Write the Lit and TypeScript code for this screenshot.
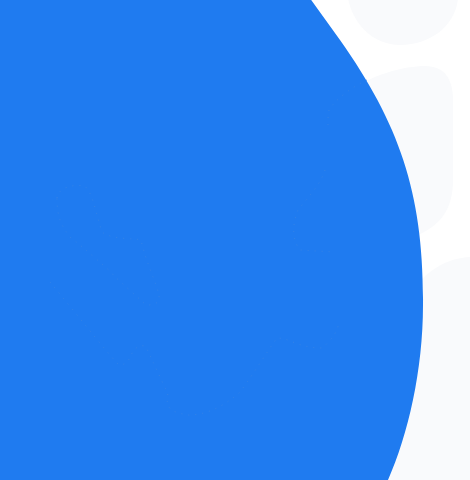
import { LitElement, html, css, svg } from "lit";
import { customElement } from "lit/decorators.js";

const BLOBS = [
  "M348 -2 C352 22 372 45 400 45 C432 45 456 24 458 -2 Z",
  "M345 95 C370 74 405 66 425 66 C445 66 453 80 453 100 L453 180 C453 210 440 225 418 235 L345 235 Z",
  "M410 295 C425 270 448 258 470 257 L470 480 L380 480 Z",
];

const BLUE =
  "M304 -10 L340 40 C400 125 424 195 423 305 C423 370 408 435 388 480 L378 498 L-10 498 L-10 -10 Z";

const GHOSTS = [
  "M57 198 C58 188 72 184 84 186 C92 190 95 210 102 232 C112 240 135 238 141 240 C146 262 156 282 159 295 C160 305 152 305 146 305 C130 290 112 275 112 273 C92 255 72 238 71 238 C60 225 57 215 57 198 Z",
  "M50 282 C75 312 105 350 117 363 C122 368 130 362 133 350 C140 345 145 345 146 347 C158 372 167 393 168 393 C165 408 170 412 188 415 C205 415 222 408 240 392 C255 372 268 350 277 338 C290 338 298 348 322 348 C332 340 340 328 338 322",
  "M325 170 C320 185 310 195 298 210 C292 225 292 240 300 250 L334 252",
  "M367 80 C350 88 335 100 329 110 C328 115 328 120 328 125",
];

@customElement("app-root")
export class AppRoot extends LitElement {
  static styles = css`
    :host {
      display: block;
      width: 470px;
      height: 480px;
      background: #ffffff;
      overflow: hidden;
    }
    .canvas {
      display: block;
      width: 470px;
      height: 480px;
    }
    .blob {
      fill: #f9fafc;
    }
    .blue {
      fill: #1f7bf0;
    }
    .ghost {
      fill: none;
      stroke: #3a84e4;
      stroke-width: 1;
      stroke-dasharray: 1 6;
      opacity: 0.8;
    }
  `;

  render() {
    return html`
      <svg class="canvas" viewBox="0 0 470 480" role="img" aria-label="Blue blob">
        ${BLOBS.map((d) => svg`<path class="blob" d=${d}></path>`)}
        <path class="blue" d=${BLUE}></path>
        ${GHOSTS.map((d) => svg`<path class="ghost" d=${d}></path>`)}
      </svg>
    `;
  }
}
